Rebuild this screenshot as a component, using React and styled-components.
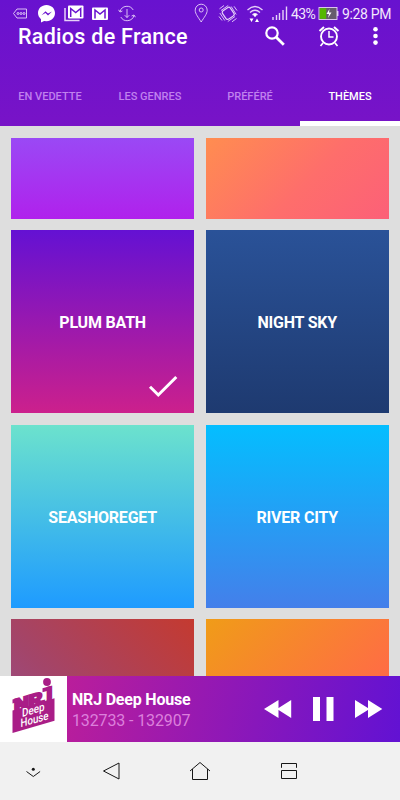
import React from "react";
import styled, { createGlobalStyle, css } from "styled-components";

const GlobalStyle = createGlobalStyle`
  * { box-sizing: border-box; }
  body { margin: 0; background: #dedede; font-family: Roboto, "Noto Sans", sans-serif; }
`;

const Screen = styled.div`
  width: 400px;
  height: 800px;
  overflow: hidden;
  display: flex;
  flex-direction: column;
  background: #dedede;
`;

const Header = styled.header`
  flex: 0 0 126px;
  display: flex;
  flex-direction: column;
  background: linear-gradient(#6812cf, #7813c7);
  color: #fff;
`;

const StatusBar = styled.div`
  flex: 0 0 26px;
  padding-left: 12px;
  display: flex;
  align-items: center;
`;

const StatusIcon = styled.svg.attrs({ fill: "none", stroke: "#e6d2f8", strokeWidth: 0.9 })`
  flex: none;
  display: block;
  width: ${(p) => p.$w}px;
  height: 26px;
  margin-left: ${(p) => p.$gap || 0}px;
`;

const StatusText = styled.span`
  flex: none;
  width: ${(p) => p.$w}px;
  margin-left: ${(p) => p.$gap}px;
  padding-top: 2px;
  font-size: 14px;
  line-height: 24px;
  letter-spacing: ${(p) => p.$spacing || 0}px;
  white-space: nowrap;
  color: #f3e8fc;
`;

const AppBar = styled.div`
  flex: 0 0 41px;
  display: flex;
  align-items: flex-start;
  padding-left: 18px;
`;

const Title = styled.h1`
  margin: -2px 0 0;
  width: 244px;
  font-size: 21.5px;
  line-height: 26px;
  font-weight: 500;
  letter-spacing: 0.28px;
  white-space: nowrap;
`;

const BarIcon = styled.svg`
  flex: none;
  display: block;
  width: 26px;
  height: 22px;
  margin-right: ${(p) => p.$gap || 0}px;
`;

const Tabs = styled.nav`
  flex: 1;
  display: grid;
  grid-template-columns: repeat(4, 1fr);
`;

const Tab = styled.div`
  display: flex;
  justify-content: center;
  padding-top: 23px;
  font-size: 11px;
  line-height: 14px;
  font-weight: 500;
  color: #c081ee;
  border-bottom: 5px solid transparent;
  ${(p) => p.$active && css`
    color: #fff;
    border-bottom-color: #fff;
  `}
`;

const ThemeGrid = styled.main`
  flex: 0 0 549.5px;
  overflow: hidden;
  display: grid;
  grid-template-columns: 183.3px 183.3px;
  grid-template-rows: 81px 183px 183.3px 183px;
  column-gap: 11.3px;
  row-gap: 11.3px;
  padding: 12px 11px 0;
`;

const ThemeCard = styled.div`
  display: grid;
  grid-template: 1fr / 1fr;
  place-items: center;
  background: ${(p) => p.$fill};
  color: #fff;
`;

const ThemeName = styled.span`
  grid-area: 1 / 1;
  padding-top: 3px;
  font-size: 16px;
  line-height: 20px;
  font-weight: 700;
  letter-spacing: -0.2px;
`;

const CheckMark = styled.svg`
  grid-area: 1 / 1;
  place-self: end;
  width: 31px;
  height: 25px;
  margin: 0 15px 14px 0;
`;

const Player = styled.section`
  flex: 0 0 66.5px;
  display: flex;
  align-items: center;
  background: linear-gradient(100deg, #cb2090 0%, #6212d3 100%);
  color: #fff;
`;

const Cover = styled.svg`
  flex: none;
  width: 67px;
  height: 66.5px;
  background: #fff;
`;

const Station = styled.div`
  width: 190px;
  padding: 3px 0 0 5px;
  white-space: nowrap;
`;

const StationName = styled.div`
  font-size: 16px;
  line-height: 21px;
  font-weight: 700;
  letter-spacing: -0.2px;
`;

const TrackInfo = styled.div`
  font-size: 16px;
  line-height: 21px;
  letter-spacing: -0.12px;
  color: #dc80dc;
`;

const Control = styled.svg.attrs({ fill: "#fff" })`
  flex: none;
  width: ${(p) => p.$w}px;
  height: 26px;
  margin-left: ${(p) => p.$gap}px;
`;

const NavBar = styled.footer`
  flex: 1;
  display: flex;
  align-items: center;
  padding-left: 26px;
  background: #f1f1f1;
`;

const NavIcon = styled.svg.attrs({ fill: "none", stroke: "#161616", strokeWidth: 1 })`
  flex: none;
  width: ${(p) => p.$w}px;
  height: 20px;
  margin-left: ${(p) => p.$gap || 0}px;
`;

const tabs = ["EN VEDETTE", "LES GENRES", "PRÉFÉRÉ", "THÈMES"];

const themes = [
  { fill: "linear-gradient(#9a49f5, #b021ec)" },
  { fill: "linear-gradient(135deg, #ff8d50 0%, #fe6e6b 55%, #fc6078 100%)" },
  { name: "PLUM BATH", fill: "linear-gradient(#6411d3, #cc208c)", selected: true },
  { name: "NIGHT SKY", fill: "linear-gradient(#2a5298, #1e3a70)" },
  { name: "SEASHOREGET", fill: "linear-gradient(#6ce2cd, #1e9bff)" },
  { name: "RIVER CITY", fill: "linear-gradient(#04beff, #447fea)" },
  { fill: "linear-gradient(45deg, #8e54a0 0%, #a3456a 45%, #c43a30 100%)" },
  { fill: "linear-gradient(135deg, #f09c18 0%, #ff6c45 65%)" },
];

function Status() {
  return (
    <StatusBar>
      <StatusIcon $w={16} viewBox="0 0 16 26">
        <path d="M1.500 13.500 5 9h9.500v9H5z" />
        <path d="M5 13.500a1 1 0 1 0 2 0 1 1 0 1 0-2 0m3 0a1 1 0 1 0 2 0 1 1 0 1 0-2 0m3 0a1 1 0 1 0 2 0 1 1 0 1 0-2 0" strokeWidth=".9" />
      </StatusIcon>
      <StatusIcon $w={18} $gap={9} viewBox="0 0 18 26">
        <path d="M9.500 5c5 0 8.500 3.600 8.500 8.100s-3.500 8.100-8.500 8.100l-2.400-.3L4 22.500v-3.300C2.200 17.700 1 15.600 1 13.100 1 8.600 4.500 5 9.500 5z" fill="#fff" stroke="none" />
        <path d="m4.500 15.200 4-4 2.500 2.400 4-2.200-4 4-2.500-2.400z" fill="#6912cf" stroke="none" />
      </StatusIcon>
      <StatusIcon $w={20} $gap={9} viewBox="0 0 20 26">
        <path d="M1 8v12.500h14.500" strokeWidth="1.500" />
        <rect x="4" y="5.500" width="15.500" height="13" rx="1" fill="#fff" stroke="none" />
        <path d="M6.700 17V8.500l5 4 5-4V17" stroke="#6912cf" strokeWidth="1.500" />
      </StatusIcon>
      <StatusIcon $w={16} $gap={8} viewBox="0 0 16 26">
        <rect x="0" y="7.500" width="16" height="12.500" rx="1" fill="#fff" stroke="none" />
        <path d="M3 18.500V10l5 4 5-4v8.500" stroke="#6912cf" strokeWidth="1.500" />
      </StatusIcon>
      <StatusIcon $w={18} $gap={10} viewBox="0 0 18 26">
        <path d="M2 11.500A7.200 7.200 0 0 1 15.200 10M16 15.500A7.200 7.200 0 0 1 2.800 17M.6 9.800 2 12l2.400-1M17.400 17.200 16 15l-2.400 1M9 9v8.500M6.700 15.200 9 17.500l2.300-2.300" />
      </StatusIcon>
      <StatusIcon $w={14} $gap={58} viewBox="0 0 14 26">
        <path d="M7.200 22C4.500 17.500 1.200 14 1.200 10.200a6 6 0 0 1 12 0c0 3.800-3.300 7.300-6 11.800z" />
        <circle cx="7.200" cy="10" r="2" />
      </StatusIcon>
      <StatusIcon $w={20} $gap={10} viewBox="0 0 20 26">
        <rect x="5.500" y="8.500" width="9.500" height="10" rx="2" transform="rotate(-35 10 13.500)" strokeWidth="1.200" />
        <path d="m3 10.500 7.200-5M1.500 8.800 6 5.500M17 16.500l-7.200 5M18.500 18.500 14 21.800M1.800 13l5 7.500M1 16.500l3 4M18.200 14.500l-5-8M19 10.500l-3-4.200" />
      </StatusIcon>
      <StatusIcon $w={18} $gap={8} viewBox="0 0 18 26">
        <path d="M1.500 10q7.500-7 15 0M4 12.500q5-4.500 10 0M6.500 15q2.500-2.500 5 0" strokeWidth="1.300" />
        <path d="m7 14.800 2-1.300 2 1.300-2 2.500zM3.500 18.500h4l-2 3.500zM9 22h4l-2-3.500z" fill="#fff" stroke="none" />
      </StatusIcon>
      <StatusIcon $w={16} $gap={8} viewBox="0 0 16 26">
        <path d="M1 17v3M4.500 15v5M7.500 13v7M11 10v10M14.500 6.500V20" strokeWidth="1.400" />
      </StatusIcon>
      <StatusText $w={26} $gap={3} $spacing={-0.6}>43%</StatusText>
      <StatusIcon $w={21} $gap={1} viewBox="0 0 21 26">
        <rect x="1" y="7.500" width="18" height="12" fill="#665c6d" />
        <path d="M1.700 8.200h6.500v10.600H1.700z" fill="#55b800" stroke="none" />
        <path d="M19.700 11v5" strokeWidth="1.500" />
        <path d="m11.500 9-3 5h2.500L10 18l3.500-5.500H11z" fill="#fff" stroke="none" />
      </StatusIcon>
      <StatusText $w={52} $gap={3} $spacing={-0.35}>9:28 PM</StatusText>
    </StatusBar>
  );
}

function NrjCover() {
  return (
    <Cover viewBox="0 0 67 66.5">
      <circle cx="47" cy="6" r="3.900" fill="#a91d87" />
      <g transform="translate(12.500 0) skewY(-16.300)" fontFamily="Roboto, sans-serif">
        <path d="M0 34.500h42v22.500H0z" fill="#a91d87" />
        <g fill="#a91d87" stroke="#a91d87" strokeWidth="1.800" fontWeight="900">
          <text x="1.500" y="37" fontSize="18" textLength="15" lengthAdjust="spacingAndGlyphs">N</text>
          <text x="16" y="37" fontSize="18" textLength="14" lengthAdjust="spacingAndGlyphs">R</text>
          <text x="27.500" y="39" fontSize="24" textLength="12.500" lengthAdjust="spacingAndGlyphs">J</text>
        </g>
        <path d="M30 21h8v4h-8zM0 23.500h5v4H0z" fill="#a91d87" />
        <text x="9.500" y="43.800" fill="#fff" fontSize="11.500" fontWeight="500" textLength="22.500" lengthAdjust="spacingAndGlyphs">Deep</text>
        <text x="8" y="53.700" fill="#fff" fontSize="11.500" fontWeight="500" textLength="28" lengthAdjust="spacingAndGlyphs">House</text>
      </g>
    </Cover>
  );
}

export default function App() {
  return (
    <Screen>
      <GlobalStyle />
      <Header>
        <Status />
        <AppBar>
          <Title>Radios de France</Title>
          <BarIcon $gap={28} viewBox="0 0 26 22">
            <circle cx="10" cy="7" r="5.700" fill="none" stroke="#fff" strokeWidth="2.200" />
            <path d="m14 11 7.800 7.800" stroke="#fff" strokeWidth="2.800" />
          </BarIcon>
          <BarIcon $gap={21} viewBox="0 0 26 22" fill="none" stroke="#fff">
            <circle cx="13" cy="10.500" r="8" strokeWidth="1.900" />
            <path d="M13 5v6h4.500" strokeWidth="1.500" />
            <path d="m3.500 5 4.500-4M22.500 5 18 1" strokeWidth="2" />
            <path d="m7 17-2.500 3M19 17l2.500 3" strokeWidth="1.700" />
          </BarIcon>
          <BarIcon viewBox="0 0 26 22" fill="#fff">
            <circle cx="12.500" cy="3.300" r="2.300" />
            <circle cx="12.500" cy="10" r="2.300" />
            <circle cx="12.500" cy="16.600" r="2.300" />
          </BarIcon>
        </AppBar>
        <Tabs>
          {tabs.map((t, i) => <Tab key={t} $active={i === 3}>{t}</Tab>)}
        </Tabs>
      </Header>
      <ThemeGrid>
        {themes.map((t, i) => (
          <ThemeCard key={i} $fill={t.fill}>
            {t.name && <ThemeName>{t.name}</ThemeName>}
            {t.selected && (
              <CheckMark viewBox="0 0 31 25">
                <path d="m2 12.800 8.300 8.200L28.300 3" fill="none" stroke="#fff" strokeWidth="3" />
              </CheckMark>
            )}
          </ThemeCard>
        ))}
      </ThemeGrid>
      <Player>
        <NrjCover />
        <Station>
          <StationName>NRJ Deep House</StationName>
          <TrackInfo>132733 - 132907</TrackInfo>
        </Station>
        <Control $w={28} $gap={7} viewBox="0 0 28 26">
          <path d="M0 13 14.500 4v18zM13 13l14.200-9v18z" />
        </Control>
        <Control $w={22} $gap={21} viewBox="0 0 22 26">
          <path d="M0 1h7v24H0zM13.500 1h7v24h-7z" />
        </Control>
        <Control $w={28} $gap={20} viewBox="0 0 28 26">
          <path d="M0 4l14.500 9L0 22zM13 4l14.300 9L13 22z" />
        </Control>
      </Player>
      <NavBar>
        <NavIcon $w={15} viewBox="0 0 15 20">
          <circle cx="7.300" cy="8.200" r="1.500" fill="#161616" stroke="none" />
          <path d="m.5 10.500 6.800 5 6.800-5" />
        </NavIcon>
        <NavIcon $w={18} $gap={61} viewBox="0 0 18 20">
          <path d="M1.500 10 17 2v16z" strokeLinejoin="round" />
        </NavIcon>
        <NavIcon $w={22} $gap={69} viewBox="0 0 22 20">
          <path d="M1 10 11 1.500 21 10M3.500 8v10.500h15V8" strokeLinejoin="round" />
        </NavIcon>
        <NavIcon $w={18} $gap={69} viewBox="0 0 18 20">
          <path d="M1.500 6.800V2.500h15v4.300M1.500 9.500h15v8h-15z" />
        </NavIcon>
      </NavBar>
    </Screen>
  );
}
